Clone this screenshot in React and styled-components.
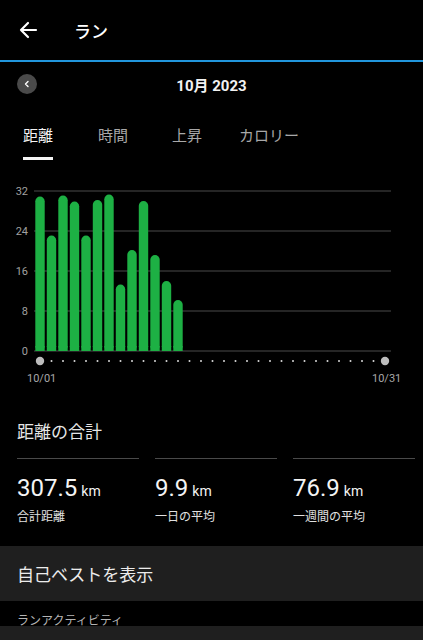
import React from "react"
import styled, { createGlobalStyle } from "styled-components"

const GlobalStyle = createGlobalStyle`
  html, body {
    margin: 0;
    padding: 0;
    background: #000;
  }
  body {
    font-family: Roboto, "Noto Sans CJK JP", sans-serif;
    color: #fff;
    overflow: hidden;
  }
`

const Page = styled.div`
  width: 423px;
  height: 640px;
  background: #000;
  display: flex;
  flex-direction: column;
  overflow: hidden;
`

const Header = styled.header`
  height: 60px;
  display: flex;
  align-items: center;
  padding-left: 19px;
  border-bottom: 2px solid #2196dc;
`

const Title = styled.h1`
  margin: 0 0 0 36px;
  font-size: 17px;
  font-weight: 500;
  color: #fff;
`

const MonthRow = styled.div`
  height: 44px;
  display: flex;
  align-items: center;
  position: relative;
  justify-content: center;
`

const RoundButton = styled.button`
  position: absolute;
  left: 17px;
  top: 12px;
  width: 20px;
  height: 20px;
  border-radius: 50%;
  border: none;
  padding: 0;
  background: #4a4a4a;
  display: flex;
  align-items: center;
  justify-content: center;
`

const Month = styled.div`
  font-size: 15px;
  font-weight: 700;
  color: #f2f2f2;
`

const Tabs = styled.nav`
  height: 56px;
  display: flex;
  align-items: flex-start;
  padding-left: 23px;
`

const Tab = styled.div`
  margin-right: ${(p) => p.$gap}px;
  padding-top: 18px;
  font-size: 15px;
  color: ${(p) => (p.$active ? "#f4f4f4" : "#a8a8a8")};
  height: 54px;
  box-sizing: border-box;
  position: relative;

  &:after {
    content: "";
    display: ${(p) => (p.$active ? "block" : "none")};
    position: absolute;
    left: 0;
    right: 0;
    bottom: 0;
    height: 3px;
    background: #f4f4f4;
  }
`

const ChartWrap = styled.div`
  height: 228px;
`

const SummaryTitle = styled.h2`
  margin: 0;
  height: 68px;
  box-sizing: border-box;
  padding: 28px 0 0 17px;
  font-size: 17px;
  font-weight: 400;
  color: #e6e6e6;
`

const Stats = styled.div`
  display: grid;
  grid-template-columns: repeat(3, 1fr);
  column-gap: 16px;
  padding: 0 8px 0 17px;
`

const Stat = styled.div`
  border-top: 1px solid #4a4a4a;
  height: 88px;
  box-sizing: border-box;
  padding-top: 14px;
`

const Value = styled.div`
  font-size: 24px;
  color: #f4f4f4;
  line-height: 30px;

  span {
    font-size: 14px;
    margin-left: 4px;
  }
`

const StatLabel = styled.div`
  font-size: 12px;
  color: #e0e0e0;
  margin-top: 1px;
`

const BestButton = styled.div`
  height: 55px;
  background: #1f1f1f;
  display: flex;
  align-items: center;
  padding-left: 17px;
  font-size: 17px;
  color: #ececec;
`

const SectionLabel = styled.div`
  height: 25px;
  box-sizing: border-box;
  padding: 10px 0 0 17px;
  font-size: 12px;
  color: #b4b4b4;
`

const Block = styled.div`
  flex: 1;
  background: #1f1f1f;
`

const values = [30.9, 23.1, 31.1, 29.9, 23.1, 30.2, 31.3, 13.3, 20.2, 30, 19.2, 14, 10.2]

const Chart = () => {
  const base = 189
  const grid = [0, 8, 16, 24, 32]
  const x0 = 40
  const step = 11.5
  return (
    <svg width="423" height="228" viewBox="0 0 423 228">
      {grid.map((g) => (
        <g key={g}>
          <line x1="34" x2="391" y1={base - g * 5} y2={base - g * 5} stroke="#4a4a4a" strokeWidth="1.2" />
          <text
            x="28"
            y={base - g * 5 + 4}
            textAnchor="end"
            fontSize="11"
            fill="#a0a0a0"
            fontFamily="Roboto, sans-serif"
          >
            {g}
          </text>
        </g>
      ))}
      {values.map((v, i) => {
        const h = v * 5
        const cx = x0 + i * step
        return (
          <rect key={i} x={cx - 4.7} y={base - h} width="9.4" height={h} rx="4.7" fill="#1db044" />
        )
      })}
      {values.map((v, i) => (
        <rect key={"b" + i} x={x0 + i * step - 4.7} y={base - 5} width="9.4" height="5" fill="#1db044" />
      ))}
      {Array.from({ length: 31 }).map((_, i) =>
        i === 0 || i === 30 ? (
          <circle key={i} cx={x0 + i * step} cy="199" r="4.2" fill="#bdbdbd" />
        ) : (
          <circle key={i} cx={x0 + i * step} cy="199" r="1" fill="#d8d8d8" />
        )
      )}
      <text x="27" y="220" fontSize="11" fill="#a8a8a8" fontFamily="Roboto, sans-serif">
        10/01
      </text>
      <text x="372" y="220" fontSize="11" fill="#a8a8a8" fontFamily="Roboto, sans-serif">
        10/31
      </text>
    </svg>
  )
}

const App = () => (
  <Page>
    <GlobalStyle />
    <Header>
      <svg width="19" height="18" viewBox="0 0 19 18" fill="none" stroke="#fff" strokeWidth="2.2" strokeLinecap="round" strokeLinejoin="round">
        <path d="M2 9h15M9 2L2 9l7 7" />
      </svg>
      <Title>ラン</Title>
    </Header>
    <MonthRow>
      <RoundButton aria-label="prev">
        <svg width="8" height="8" viewBox="0 0 8 8" fill="none" stroke="#fff" strokeWidth="1.4" strokeLinecap="round" strokeLinejoin="round">
          <path d="M5 1.5L2.5 4 5 6.5" />
        </svg>
      </RoundButton>
      <Month>10月 2023</Month>
    </MonthRow>
    <Tabs>
      <Tab $active $gap={45}>距離</Tab>
      <Tab $gap={44}>時間</Tab>
      <Tab $gap={37}>上昇</Tab>
      <Tab $gap={0}>カロリー</Tab>
    </Tabs>
    <ChartWrap>
      <Chart />
    </ChartWrap>
    <SummaryTitle>距離の合計</SummaryTitle>
    <Stats>
      <Stat>
        <Value>307.5<span>km</span></Value>
        <StatLabel>合計距離</StatLabel>
      </Stat>
      <Stat>
        <Value>9.9<span>km</span></Value>
        <StatLabel>一日の平均</StatLabel>
      </Stat>
      <Stat>
        <Value>76.9<span>km</span></Value>
        <StatLabel>一週間の平均</StatLabel>
      </Stat>
    </Stats>
    <BestButton>自己ベストを表示</BestButton>
    <SectionLabel>ランアクティビティ</SectionLabel>
    <Block />
  </Page>
)

export default App
